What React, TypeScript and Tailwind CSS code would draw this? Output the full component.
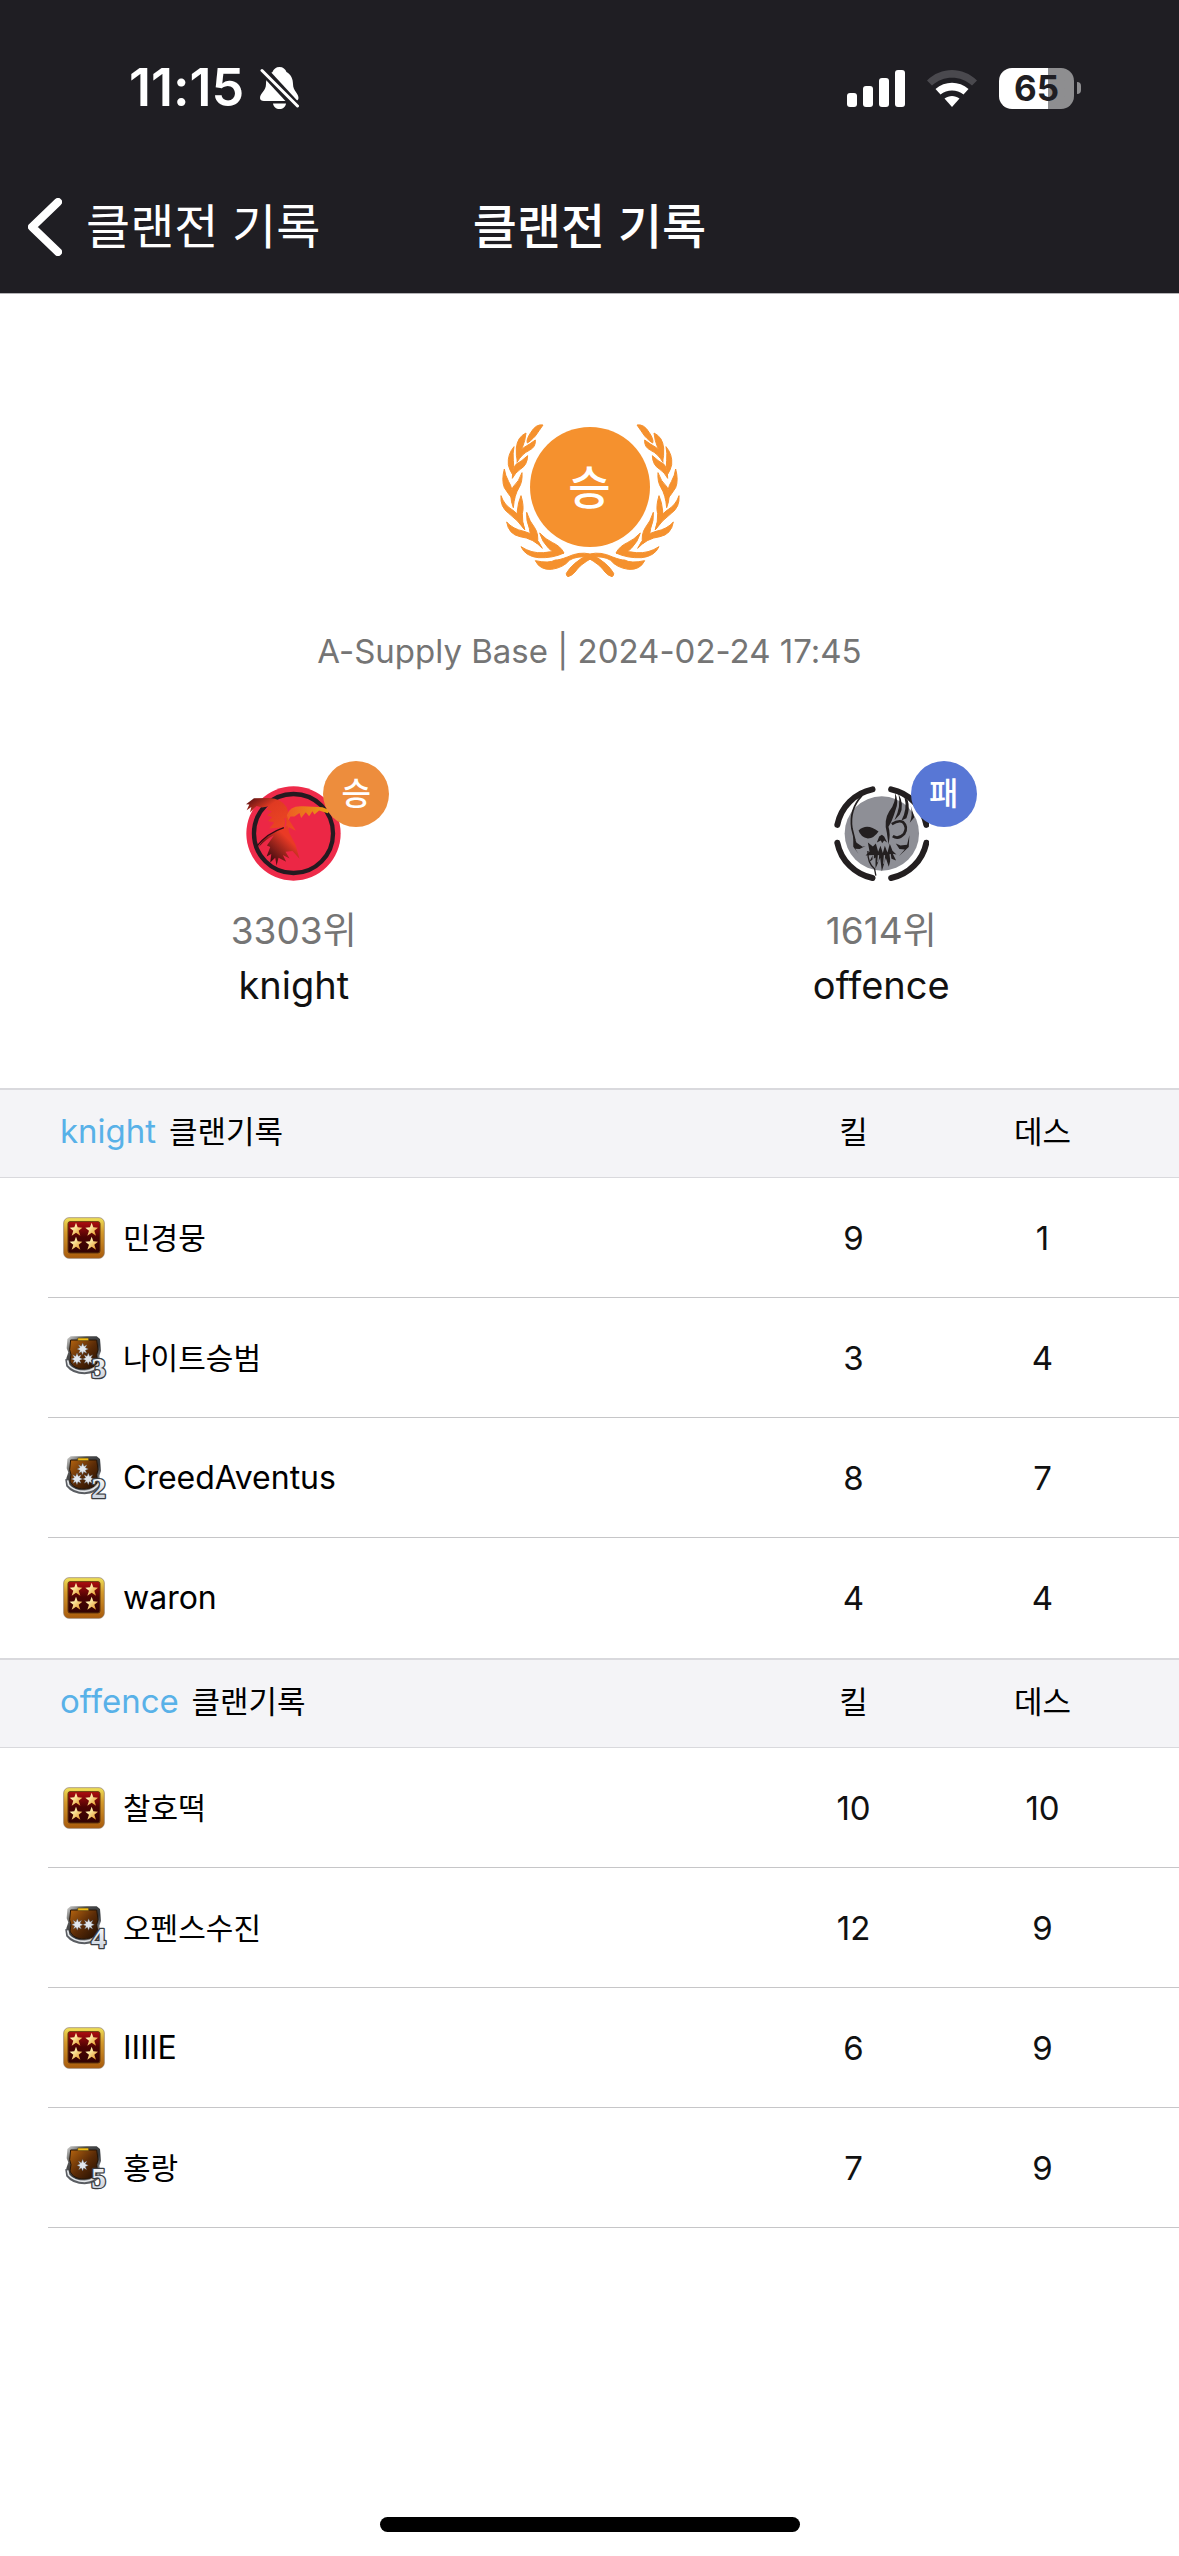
import type { ReactNode } from 'react';

type Player = { name: string; kills: number; deaths: number; stars: number; tier?: number };
type Clan = { name: string; players: Player[] };

const clans: Clan[] = [
  {
    name: 'knight',
    players: [
      { name: '민경뭉', kills: 9, deaths: 1, stars: 4 },
      { name: '나이트승범', kills: 3, deaths: 4, stars: 3, tier: 3 },
      { name: 'CreedAventus', kills: 8, deaths: 7, stars: 3, tier: 2 },
      { name: 'waron', kills: 4, deaths: 4, stars: 4 },
    ],
  },
  {
    name: 'offence',
    players: [
      { name: '찰호떡', kills: 10, deaths: 10, stars: 4 },
      { name: '오펜스수진', kills: 12, deaths: 9, stars: 2, tier: 4 },
      { name: 'IIIIE', kills: 6, deaths: 9, stars: 4 },
      { name: '홍랑', kills: 7, deaths: 9, stars: 1, tier: 5 },
    ],
  },
];

const starPositions: Record<number, number[][]> = {
  1: [[50, 57]],
  2: [[34, 55], [68, 55]],
  3: [[50, 38], [33, 68], [67, 68]],
};

function BellOffIcon() {
  return (
    <svg viewBox="0 0 39 42" className="h-[42px] w-[39px]" aria-hidden="true">
      <path d="M19.500 0C23 0 25.500 2 26.500 5C31 7.500 33 12 33 17C33 24 38.500 26 38.500 31C38.500 33 37 34 35 34H4C1.500 34 0 33 0 31C0 26 6 24 6 17C6 12 8 7.500 12.500 5C13.500 2 16 0 19.500 0Z" fill="#fff" />
      <path d="M13 36.500H26C25.500 40 23 42 19.500 42S13.500 40 13 36.500Z" fill="#fff" />
      <path d="M0 0L39 42" stroke="#1f1e23" strokeWidth="9" />
      <path d="M2 3.500L37.500 39" stroke="#fff" strokeWidth="3" strokeLinecap="round" />
    </svg>
  );
}

function SignalIcon() {
  return (
    <svg viewBox="0 0 58 37" className="h-[37px] w-[58px]" fill="#fff" aria-hidden="true">
      <rect x="0" y="23" width="10" height="14" rx="3" />
      <rect x="16" y="16" width="10" height="21" rx="3" />
      <rect x="32" y="8" width="10" height="29" rx="3" />
      <rect x="48" y="0" width="10" height="37" rx="3" />
    </svg>
  );
}

function WifiIcon() {
  return (
    <svg viewBox="0 0 50 37" className="h-[37px] w-[50px]" aria-hidden="true">
      <path d="M0 10.500C14-3.500 36-3.500 50 10.500L45 15.500C34 5 16 5 5 15.500Z" fill="#4a494e" />
      <path d="M8.500 19C18 10.500 32 10.500 41.500 19L36.500 24.500C30 19 20 19 13.500 24.500Z" fill="#fff" />
      <path d="M17.500 28.500C22 25 28 25 32.500 28.500L25 37Z" fill="#fff" />
    </svg>
  );
}

function Battery() {
  return (
    <div className="flex items-center gap-[3px]">
      <div className="flex h-[41px] w-[75px] items-center justify-center rounded-[13px] bg-linear-to-r from-white from-65% to-[#8e8e90] to-65% text-[35px] leading-none font-bold text-[#1f1e23]">
        65
      </div>
      <div className="h-3 w-1 rounded-r-full bg-[#8e8e90]" />
    </div>
  );
}

function HalfWreath() {
  return (
    <g>
      <path d="M189 76Q168 72 152 99Q138 120 142 130Q150 126 166 109Q178 92 189 76Z" />
      <path d="M138 100Q112 112 109 145Q108 172 112 183Q116 158 127 144Q136 122 138 100Z" />
      <path d="M166 121Q168 142 148 152Q126 162 111 188Q112 157 131 144Q150 133 166 121Z" />
      <path d="M102 141Q82 165 85 195Q88 210 96 222Q104 196 100 182Q98 160 102 141Z" />
      <path d="M143 168Q142 196 122 208Q106 218 97 236Q97 207 108 194Q126 184 143 168Z" />
      <path d="M73 208Q64 242 73 264Q86 284 97 298Q99 266 86 246Q75 226 73 208Z" />
      <path d="M126 219Q128 246 117 264Q103 286 100 324Q86 288 99 262Q118 244 126 219Z" />
      <path d="M63 288Q60 322 86 341Q114 362 134 390Q126 350 99 332Q72 316 63 288Z" />
      <path d="M123 288Q133 320 127 342Q126 366 134 390Q110 362 112 334Q114 308 123 288Z" />
      <path d="M80 367Q86 404 120 411Q160 416 187 446Q166 402 132 395Q98 388 80 367Z" />
      <path d="M140 338Q149 366 164 384Q177 404 172 432Q150 414 148 386Q138 362 140 338Z" />
      <path d="M123 441Q136 470 175 474Q218 476 252 460Q222 452 190 459Q155 462 123 441Z" />
      <path d="M179 400Q198 420 218 429Q242 440 252 460Q224 466 206 446Q186 426 179 400Z" />
      <path d="M166 483Q180 512 215 509Q250 504 268 482Q288 468 332 472L330 463Q298 455 262 472Q236 482 226 481Q208 492 166 483Z" />
      <path d="M259 521Q276 490 326 464L338 474Q300 494 285 517Q276 528 264 531Q258 529 259 521Z" />
    </g>
  );
}

function Medal() {
  return (
    <div className="relative flex h-[155px] w-[180px] justify-center pt-1">
      <svg viewBox="60 70 540 465" className="absolute inset-0 h-full w-full" fill="#f5912e" stroke="#f5912e" strokeWidth="3" strokeLinejoin="round" aria-hidden="true">
        <HalfWreath />
        <g transform="matrix(-1 0 0 1 660 0)">
          <HalfWreath />
        </g>
      </svg>
      <div className="relative flex size-[120px] items-center justify-center rounded-full bg-[#f5912e] text-[46px] leading-none font-medium text-white">
        승
      </div>
    </div>
  );
}

function KnightEmblem() {
  return (
    <svg viewBox="80 142 286 286" className="size-[95px]" aria-hidden="true">
      <defs>
        <linearGradient id="wing" x1="0" y1="0" x2="1" y2="1">
          <stop offset="0" stopColor="#4b0c10" />
          <stop offset="0.35" stopColor="#e03a22" />
          <stop offset="1" stopColor="#f04a24" />
        </linearGradient>
        <linearGradient id="wingRight" x1="0" y1="0" x2="1" y2="0">
          <stop offset="0" stopColor="#ee5a24" />
          <stop offset="1" stopColor="#e8a012" />
        </linearGradient>
        <linearGradient id="tail" x1="0" y1="1" x2="1" y2="0">
          <stop offset="0.2" stopColor="#3d0a10" />
          <stop offset="0.7" stopColor="#ea3a25" />
        </linearGradient>
      </defs>
      <circle cx="223" cy="285" r="142" fill="#ee2b4a" />
      <circle cx="223" cy="285" r="119" fill="#ec2745" stroke="#241a20" strokeWidth="13" />
      <path d="M80 197L104 179L150 178Q186 180 202 205Q210 223 207 240L230 277L209 266L204 282L190 266L150 270L165 252L146 247L159 236L143 230L158 219L142 213L150 203L128 207L112 202L92 222L96 205L82 215L90 198Z" fill="url(#wing)" />
      <path d="M203 230Q211 200 252 203L310 206L332 215L326 224L300 216L286 228L280 218L270 233L260 221L246 238L241 223L226 234L214 234L208 245Z" fill="url(#wingRight)" />
      <path d="M205 262Q174 274 150 291Q127 306 119 325Q142 300 164 291L143 321L153 326L142 354L156 347L153 372L168 358L172 382L178 358L201 370L191 350L211 360L199 340L220 338L241 361L229 319L210 283Z" fill="url(#tail)" />
      <path d="M113 323Q143 284 194 267" stroke="#350c13" strokeWidth="4" fill="none" />
      <path d="M197 239Q203 250 196 266" stroke="#ee2b4a" strokeWidth="4" fill="none" />
    </svg>
  );
}

function OffenceEmblem() {
  return (
    <svg viewBox="104 142 286 286" className="size-[95px]" aria-hidden="true">
      <circle cx="248" cy="285" r="112" fill="#8e8f96" />
      <g fill="none" stroke="#231f20" strokeWidth="18" strokeLinecap="round">
        <path d="M220 152A136 136 0 0 0 114 259" />
        <path d="M276 152A136 136 0 0 1 382 259" />
        <path d="M114 313A136 136 0 0 0 220 419" />
        <path d="M382 313A136 136 0 0 1 276 419" />
      </g>
      <g fill="#231f20">
        <path d="M178 276Q203 252 238 279Q225 299 206 300Q184 296 178 276Z" />
        <path d="M288 162Q291 192 270 219Q253 246 263 282L268 318Q275 286 268 265Q280 246 289 215Q300 190 288 162Z" />
        <path d="M298 165Q307 203 286 245L302 228Q317 198 298 165Z" />
        <path d="M316 175Q326 210 307 246L322 239Q334 210 326 185Z" />
        <path d="M335 202Q342 229 332 253L346 236Z" />
        <path d="M240 294L233 312L245 306L249 314L255 306L264 312L255 294L248 289Z" />
        <path d="M206 312L221 324L230 315L237 340L244 322L251 344L257 322L265 342L272 316L280 337L292 348L281 346L291 366L275 360L269 385L260 359L248 399L243 358L229 390L229 357L210 371L221 350L199 351L211 339Z" />
        <path d="M162 290L172 313L190 325L199 323L181 332L168 331L178 347L162 325Z" />
        <path d="M331 290L324 319L304 321L290 315L301 332L317 333L300 353L329 326Z" />
      </g>
      <g fill="none" stroke="#231f20">
        <path d="M278 257Q299 243 312 251Q327 265 315 286Q298 304 281 293" strokeWidth="8" />
        <path d="M188 171Q149 213 158 270L167 306" strokeWidth="5" />
        <path d="M206 338Q205 376 226 391L230 412" strokeWidth="4" />
        <path d="M222 350L222 374M238 350L236 372M256 350L254 376M273 347L276 370" stroke="#8e8f96" strokeWidth="4" />
      </g>
    </svg>
  );
}

function RankIcon({ stars, tier }: { stars: number; tier?: number }) {
  if (!tier) {
    return (
      <svg viewBox="0 0 126 126" className="size-[42px]" aria-hidden="true">
        <defs>
          <linearGradient id="gold" x1="0" y1="0" x2="0" y2="1">
            <stop offset="0" stopColor="#f0e25a" />
            <stop offset="0.35" stopColor="#d49a2c" />
            <stop offset="1" stopColor="#a85a0c" />
          </linearGradient>
          <linearGradient id="crimson" x1="0" y1="0" x2="0" y2="1">
            <stop offset="0" stopColor="#b00d10" />
            <stop offset="0.5" stopColor="#4a0303" />
            <stop offset="1" stopColor="#300202" />
          </linearGradient>
          <linearGradient id="starGold" x1="0" y1="0" x2="1" y2="1">
            <stop offset="0.3" stopColor="#fff3b0" />
            <stop offset="0.9" stopColor="#e6972a" />
          </linearGradient>
        </defs>
        <rect x="2" y="2" width="122" height="122" rx="16" fill="url(#gold)" stroke="#8d7560" strokeWidth="2" />
        <rect x="15" y="14" width="96" height="94" rx="6" fill="url(#crimson)" stroke="#5d330c" strokeWidth="3" />
        {[[39, 38], [86, 38], [39, 80], [86, 80]].map(([x, y]) => (
          <path
            key={`${x}-${y}`}
            transform={`translate(${x} ${y})`}
            d="M0-21L5-7L19-6L8 3L13 18L0 9L-13 18L-8 3L-19-6L-5-7Z"
            fill="url(#starGold)"
          />
        ))}
      </svg>
    );
  }

  return (
    <svg viewBox="-9 -4 135 135" className="size-[45px] overflow-visible" aria-hidden="true">
      <defs>
        <linearGradient id="steel" x1="0" y1="0" x2="1" y2="1">
          <stop offset="0" stopColor="#d8d8d6" />
          <stop offset="0.3" stopColor="#4c4c4c" />
          <stop offset="0.6" stopColor="#33363a" />
          <stop offset="1" stopColor="#dfe3e8" />
        </linearGradient>
        <linearGradient id="bronze" x1="0" y1="0" x2="1" y2="1">
          <stop offset="0" stopColor="#b5640f" />
          <stop offset="0.5" stopColor="#5c2c07" />
          <stop offset="1" stopColor="#1d0c02" />
        </linearGradient>
        <linearGradient id="digit" x1="0" y1="0" x2="0" y2="1">
          <stop offset="0" stopColor="#ffffff" />
          <stop offset="1" stopColor="#c3ccd8" />
        </linearGradient>
      </defs>
      <path d="M4 8L14 0H92L102 8L105 44L100 58L104 82C94 100 76 108 54 108C32 108 12 100 3 86L1 66L7 48L2 36Z" fill="url(#steel)" />
      <path d="M1 68L4 88C18 106 38 110 56 110C78 110 94 100 102 84" fill="none" stroke="#5a5d62" strokeWidth="7" />
      <path d="M5 72L8 86C20 100 38 105 56 105C76 104 90 96 99 82" fill="none" stroke="#e4e7ea" strokeWidth="5" />
      <path d="M14 11H92L96 40L92 55L95 74C90 90 74 98 54 98C34 98 18 90 12 74L15 55L11 40Z" fill="url(#bronze)" stroke="#251406" strokeWidth="3" />
      <rect x="35" y="5" width="33" height="8" rx="2" fill="#f2bd16" stroke="#52401c" strokeWidth="2" />
      {starPositions[stars].map(([x, y]) => (
        <path
          key={`${x}-${y}`}
          transform={`translate(${x} ${y})`}
          d="M0-18L4-8L13-13L8-4L17 0L8 4L12 13L3 8L0 17L-4 8L-12 13L-8 4L-17 0L-8-4L-13-13L-4-8Z"
          fill="#e3e8ee"
          stroke="#4c5660"
          strokeWidth="1"
        />
      ))}
      <text
        x="98"
        y="125"
        textAnchor="middle"
        fontSize="88"
        fontWeight="700"
        fontFamily="'Liberation Serif', serif"
        fill="url(#digit)"
        stroke="#3a3d41"
        strokeWidth="8"
        strokeLinejoin="round"
        paintOrder="stroke"
      >
        {tier}
      </text>
    </svg>
  );
}

function Team({ rank, name, result, badge, children }: { rank: string; name: string; result: string; badge: string; children: ReactNode }) {
  return (
    <div className="flex flex-col items-center">
      <div className="relative">
        {children}
        <span className={`absolute -top-[25px] left-[77px] flex size-[66px] items-center justify-center rounded-full text-[32px] leading-none font-medium text-white ${badge}`}>
          {result}
        </span>
      </div>
      <p className="mt-[23px] text-[37px] leading-[54px] text-[#757575]">{rank}</p>
      <p className="text-[38px] leading-[54px] text-[#111]">{name}</p>
    </div>
  );
}

function ClanTable({ clan, last }: { clan: Clan; last: boolean }) {
  return (
    <table className="w-full table-fixed border-separate border-spacing-0 text-[33px] leading-[40px]">
      <thead>
        <tr className="h-[90px] bg-[#f4f4f7] text-[31px] text-black">
          <th scope="col" className="border-t-2 border-b border-[#d9d9dd] pb-1 pl-[60px] text-left font-normal">
            <span className="mr-1 text-[33px] text-[#58b1e8]">{clan.name}</span> 클랜기록
          </th>
          <th scope="col" className="w-[189px] border-t-2 border-b border-[#d9d9dd] pb-1 font-normal">킬</th>
          <th scope="col" className="w-[231px] border-t-2 border-b border-[#d9d9dd] pr-[42px] pb-1 font-normal">데스</th>
        </tr>
      </thead>
      <tbody>
        {clan.players.map((player, i) => {
          const line = last || i < clan.players.length - 1 ? 'border-b border-[#c6c6c8]' : '';
          const latin = /^[A-Za-z]/.test(player.name);
          return (
            <tr key={player.name} className="text-center text-[#111]">
              <td className="p-0">
                <div className={`ml-12 flex h-[120px] items-center gap-[15px] pl-[15px] text-black ${line}`}>
                  <span className="flex w-[45px] shrink-0">
                    <RankIcon stars={player.stars} tier={player.tier} />
                  </span>
                  <span className={latin ? 'text-[32px]' : 'text-[30px]'}>{player.name}</span>
                </div>
              </td>
              <td className={`h-[120px] p-0 ${line}`}>{player.kills}</td>
              <td className={`h-[120px] p-0 pr-[42px] ${line}`}>{player.deaths}</td>
            </tr>
          );
        })}
      </tbody>
    </table>
  );
}

export default function App() {
  return (
    <div className="flex min-h-screen flex-col bg-white font-['Inter','Noto_Sans_CJK_KR',sans-serif] [font-variant-ligatures:none]">
      {/* Status bar and navigation */}
      <header className="border-b border-[#b4b3b6] bg-[#1f1e23] text-white">
        <div className="flex h-[160px] items-center justify-between pt-4 pr-[98px] pl-[129px]">
          <div className="flex items-center gap-4">
            <span className="text-[52px] leading-none font-semibold">11:15</span>
            <BellOffIcon />
          </div>
          <div className="flex items-center gap-[22px]">
            <SignalIcon />
            <WifiIcon />
            <Battery />
          </div>
        </div>
        <nav className="grid h-[133px] grid-cols-[1fr_auto_1fr] items-center px-7 text-[48px] leading-none">
          <button type="button" className="flex items-center gap-6">
            <svg viewBox="0 0 34 58" className="h-[58px] w-[34px]" fill="none" stroke="#fff" strokeWidth="8" strokeLinecap="round" strokeLinejoin="round" aria-hidden="true">
              <path d="M30 4L4 29L30 54" />
            </svg>
            클랜전 기록
          </button>
          <h1 className="font-medium">클랜전 기록</h1>
        </nav>
      </header>

      <main>
        {/* Match summary */}
        <section className="flex flex-col items-center pt-[129px] pb-[76px]">
          <Medal />
          <p className="mt-[53px] text-[33px] leading-[40px] text-[#757575]">A-Supply Base | 2024-02-24 17:45</p>
          <div className="mt-[115px] grid w-full grid-cols-2 pr-1">
            <Team rank="3303위" name="knight" result="승" badge="bg-[#ed8d3d]">
              <KnightEmblem />
            </Team>
            <Team rank="1614위" name="offence" result="패" badge="bg-[#5877d5]">
              <OffenceEmblem />
            </Team>
          </div>
        </section>

        {/* Clan records */}
        {clans.map((clan, i) => (
          <ClanTable key={clan.name} clan={clan} last={i === clans.length - 1} />
        ))}
      </main>

      {/* Home indicator */}
      <footer className="mt-auto flex justify-center pb-6">
        <div className="h-[15px] w-[420px] rounded-full bg-black" />
      </footer>
    </div>
  );
}
